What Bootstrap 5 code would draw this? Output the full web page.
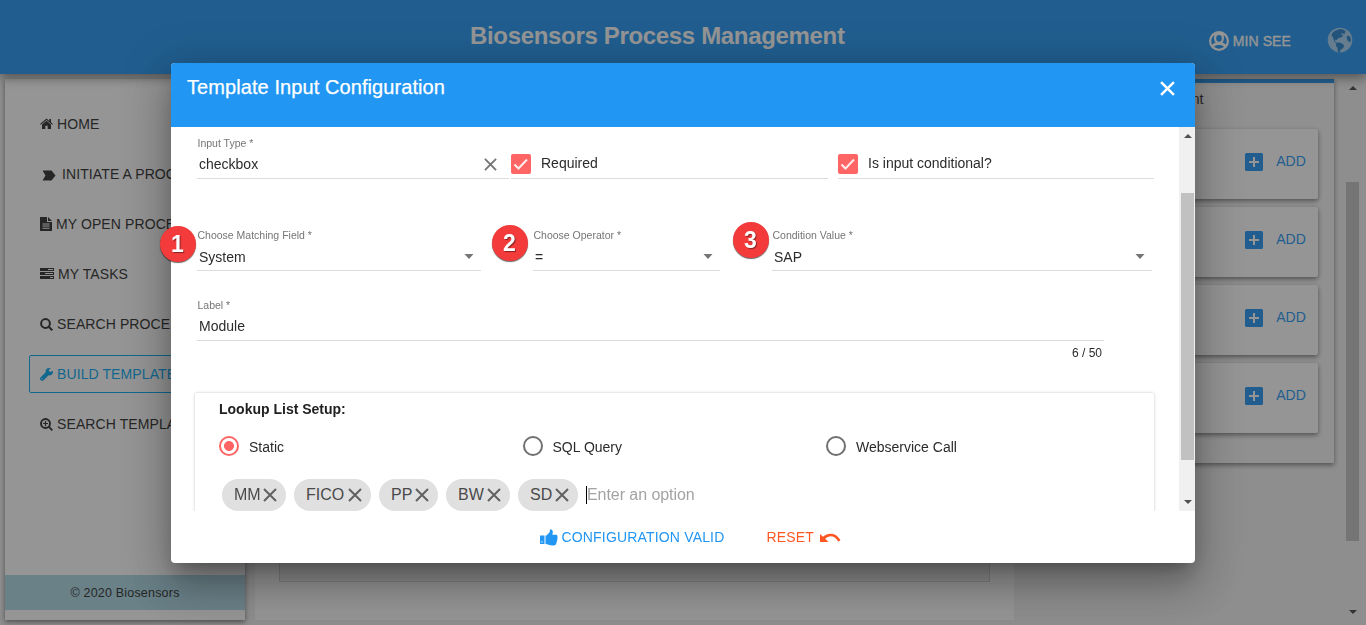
<!DOCTYPE html>
<html lang="en">
<head>
<meta charset="utf-8">
<title>Biosensors Process Management</title>
<link href="https://cdn.jsdelivr.net/npm/bootstrap@5.3.0/dist/css/bootstrap.min.css" rel="stylesheet">
<style>
body{font-family:"Liberation Sans",Arial,sans-serif;font-size:14px;line-height:20px;color:#2b2b2b;background:#f2f2f2;height:625px;overflow:hidden}
svg{flex:none;display:block}
.topbar{height:74px;background:#2196f3;color:#fff;box-shadow:0 4px 10px rgba(0,0,0,.45);position:relative;z-index:1;padding-right:13px}
.brand-title{font-size:24px;font-weight:700;letter-spacing:-.33px;padding-left:470px;line-height:72px;margin-top:-2px;white-space:nowrap}
.user-box{font-size:14px;-webkit-text-stroke:.3px #fff}
.panel{background:#fff;box-shadow:0 2px 5px rgba(0,0,0,.5)}
.page-area{height:551px;padding:5px 5px 5px 5px}
.side-menu{width:240px;height:541px;flex:none;padding-top:26px}
.side-item{height:38px;margin:0 24px 12px;padding-left:10px;border:1px solid transparent;border-radius:2px;white-space:nowrap;letter-spacing:.1px;overflow:hidden}
.side-item.current{border-color:#03a9f4;color:#03a9f4}
.side-foot{height:35px;background:#add8e6;margin-bottom:10px;font-size:12.5px;letter-spacing:.2px}
.middle{width:759px;height:541px;flex:none;margin-left:10px;background:#fff;padding:0 24px 38px}
.middle-box{background:#f0f0f0;border:1px solid #d4d4d4;border-top:0;height:503px}
.tools{width:310px;height:384px;flex:none;margin-left:10px;border-top:4px solid #2196f3;background:#f6f6f6;padding:0 16px}
.tool-title{height:46px;line-height:32px;text-align:center}
.tool-card{height:70px;margin-bottom:8px;border-radius:2px;color:#2196f3;padding:0 12px 4px}
.tool-card span{margin:-2px 0 0 13px;letter-spacing:.1px}
.page-scroll{width:17px;height:541px;margin-left:10px;background:#f1f1f1;padding:7px 2px 6px}
.page-thumb{width:13px;height:359px;background:#c1c1c1;margin-top:92px}
.modal-backdrop.tint{background:#212121;opacity:.48}
.modal-dialog.sheet{width:1024px;max-width:1024px;height:500px;margin:63px auto 0;transform:none}
.sheet .modal-content{height:500px;border:0;border-radius:4px;box-shadow:0 11px 15px -7px rgba(0,0,0,.25),0 24px 38px 3px rgba(0,0,0,.18),0 9px 46px 8px rgba(0,0,0,.18);color:#2b2b2b}
.sheet-head{height:64px;background:#2196f3;color:#fff;border-radius:4px 4px 0 0;padding:0 20px 0 16px}
.sheet-title{font-size:20px;line-height:48px;letter-spacing:.08px;-webkit-text-stroke:.25px #fff}
.sheet-view{height:384px;overflow:hidden}
.sheet-form{width:1008px;padding-left:26px}
.line-field{border-bottom:1px solid #dcdcdc;flex:none}
.line-field .cap{font-size:10.5px;line-height:14px;color:#757575;padding-left:.5px}
.val{padding-left:2px}
.row-a{height:52px}
.row-a .line-field{height:52px}
.row-a .first{padding-top:9px}
.row-b{margin-top:49px}
.row-b .line-field{height:43px}
.row-c{margin-top:27px}
.row-c .line-field{height:43px;width:907px}
.drop-val{height:29px;padding:0 7px 0 2px}
.drop-val span{padding-top:1px}
.tick{width:20px;height:20px;border-radius:2px;background:#ff6565}
.counter{width:905px;text-align:right;font-size:12px;line-height:16px;margin-top:4px}
.lookup{margin:32px 0 0 -2px;width:959px;height:140px;padding-left:24px;box-shadow:0 0 3px rgba(0,0,0,.24);border-radius:2px}
.lookup-title{font-weight:700;line-height:20px;padding-top:6px;color:#212121}
.choice{width:303.5px;height:20px}
.dot{width:20px;height:20px;border:2px solid #707070;border-radius:50%}
.dot.on{border-color:#ff6565;background:radial-gradient(circle,#ff6565 4.6px,transparent 5.3px)}
.tag-pill{height:32px;border-radius:16px;background:#e0e0e0;color:#4a4a4a;font-size:16px;padding:0 9px 0 12px}
.tag-pill svg{margin-left:auto;color:#616161}
.entry{height:18px;border-left:1px solid #000;font-size:16px;line-height:18px;color:#a3a3a3;letter-spacing:-.06px}
.bar-scroll{width:16px;height:384px;background:#f0f0f0;padding:7px 1px 7px 2px}
.bar-thumb{width:13px;height:267px;background:#c1c1c1;margin-top:55px}
.sheet-foot{height:52px;padding-left:369px;letter-spacing:.17px}
.num{position:absolute;width:36px;height:36px;border-radius:50%;background:#f33b3b;color:#fff;font-size:23px;font-weight:700;line-height:37px;text-align:center;box-shadow:0 1px 1px rgba(0,0,0,.6);text-shadow:1px 1px 1px rgba(0,0,0,.45);z-index:3}
.num-1{left:-11.500px;top:163px}.num-2{left:320.500px;top:162px}.num-3{left:561.500px;top:159px}
</style>
</head>
<body>
<svg width="0" height="0" class="d-none">
  <symbol id="plusbox" viewBox="0 0 18 18"><path fill="#2196f3" d="M1.500 0h15A1.500 1.500 0 0 1 18 1.500v15a1.500 1.500 0 0 1-1.500 1.500h-15A1.500 1.500 0 0 1 0 16.500v-15A1.500 1.500 0 0 1 1.500 0z"/><path fill="#fff" d="M8 4h2v4h4v2h-4v4H8v-4H4V8h4z"/></symbol>
  <symbol id="cross" viewBox="0 0 14 14"><path fill="none" stroke="currentColor" stroke-width="2" d="M1 1l12 12M13 1L1 13"/></symbol>
  <symbol id="caret" viewBox="0 0 10 5"><path fill="currentColor" d="M.5 0h9L5 5z"/></symbol>
  <symbol id="check" viewBox="0 0 20 20"><path fill="none" stroke="#fff" stroke-opacity=".88" stroke-width="2" d="M3.500 10.500l4 4L16 5.500"/></symbol>
</svg>

<header class="topbar d-flex align-items-center">
  <div class="brand-title me-auto">Biosensors Process Management</div>
  <div class="user-box d-flex align-items-center mt-2">
    <svg width="20" height="20" viewBox="0 0 20 20"><circle cx="10" cy="10" r="10" fill="#fff"/><g fill="#2196f3"><path d="M5.400 3.900C4.700 6.500 5 10 6.600 11.800 5.200 12.200 4 12.900 3.300 13.700 1.500 10.800 2 6.300 5.400 3.900z"/><path d="M14.600 3.900c.7 2.600.4 6.100-1.200 7.900 1.400.4 2.600 1.100 3.300 1.900 1.800-2.900 1.300-7.400-2.100-9.800z"/><ellipse cx="10" cy="7.400" rx="2.800" ry="3.300"/><path d="M5 15.600c2-2.100 8-2.100 10 0-2.800 2.700-7.200 2.700-10 0z"/></g></svg>
    <span style="margin-left:4px;letter-spacing:.1px">MIN SEE</span>
  </div>
  <svg style="margin:6px 0 0 36px" width="26" height="26" viewBox="0 0 26 26" opacity=".68"><circle cx="13" cy="13" r="12.300" fill="#e3eef5"/><path fill="#2479bd" d="M5 6.500C6.500 4.500 9 3 11 2.800l2-.8 3 .6 2.500 1.400-.5 2.500-1.500.5-1.500-1-1 1.500 2.500 1-2.500 2-2.500.5-1.500 2-1.500-.5-.7 1.700 2 1.500 3-.2 3 1.500 1.500 2-1.500 2.500-2 1-1.500 3-1.300-.5-.5-4-1.700-2.500.5-1.700L7 14l-1-3.500-1.500-2zM20.500 8.500l2.500 1 1 3.500-1 2.500-2.500-2-1-3z"/></svg>
</header>

<main class="page-area d-flex align-items-start">
  <nav class="side-menu panel d-flex flex-column">
    <div class="side-item d-flex align-items-center"><svg width="13" height="12" viewBox="0 0 13 12" class="me-1" fill="currentColor"><path d="M6.500 2.800L2 6.600V11h3.300V7.700h2.400V11H11V6.600z"/><path d="M6.500.6L0 6l.7.8 5.800-4.900L12.300 6.800 13 6l-2-1.700V1H9.300v1.900z"/></svg>HOME</div>
    <div class="side-item d-flex align-items-center"><svg width="14" height="11" viewBox="0 0 14 11" style="margin:2px 6px 0 2px" fill="currentColor"><path d="M.5.500h9L13.500 5.500l-4 5h-9l3-5z"/></svg>INITIATE A PROCESS</div>
    <div class="side-item d-flex align-items-center"><svg width="12" height="14" viewBox="0 0 12 14" class="me-1" fill="currentColor"><path fill-rule="evenodd" d="M0 0h7v5h5v9H0zM2.500 6.500h7v1h-7zM2.500 8.600h7v1h-7zM2.500 10.700h7v1h-7z"/><path d="M8 0l4 4H8z"/></svg>MY OPEN PROCESSES</div>
    <div class="side-item d-flex align-items-center"><svg width="14" height="11" viewBox="0 0 14 11" style="margin:-1px 4px 0 0" fill="currentColor"><path fill-rule="evenodd" d="M0 0h14v3H0zM0 4h14v3H0zM0 8h14v3H0zM8 1h5v1H8zM5 5h8v1H5zM10 9h3v1h-3z"/></svg>MY TASKS</div>
    <div class="side-item d-flex align-items-center"><svg width="13" height="13" viewBox="0 0 13 13" class="me-1" fill="none" stroke="currentColor" stroke-width="2"><circle cx="5.500" cy="5.500" r="4.400"/><path d="M8.700 8.700l3.600 3.600"/></svg>SEARCH PROCESS</div>
    <div class="side-item current d-flex align-items-center"><svg width="13" height="13" viewBox="0 0 13 13" class="me-1" fill="currentColor"><path fill-rule="evenodd" d="M11 .4L9 0C6.700 0 5.200 2 5.700 4.300L.5 9.600c-.7.700-.6 1.500 0 2.300l.6.600c.7.600 1.500.6 2.200 0l5.300-5.200c2.200.5 4.200-.9 4.400-3.300L12.700 2.700 10.500 4 8.900 3.100V1.700zM1.500 10.800a.6.600 0 1 1 1.200 0 .6.600 0 0 1-1.200 0z"/></svg>BUILD TEMPLATES</div>
    <div class="side-item d-flex align-items-center"><svg width="13" height="13" viewBox="0 0 13 13" class="me-1" fill="none" stroke="currentColor" stroke-width="1.900"><circle cx="5.500" cy="5.500" r="4.500"/><path d="M8.700 8.700l3.600 3.600"/><path stroke-width="1.200" d="M3 5.500h5M5.500 3v5"/></svg>SEARCH TEMPLATES</div>
    <div class="side-foot mt-auto d-flex align-items-center justify-content-center">© 2020 Biosensors</div>
  </nav>
  <section class="middle"><div class="middle-box"></div></section>
  <aside class="tools panel">
    <div class="tool-title">Content</div>
    <div class="tool-card panel d-flex align-items-center justify-content-end"><svg width="18" height="18"><use href="#plusbox"/></svg><span>ADD</span></div>
    <div class="tool-card panel d-flex align-items-center justify-content-end"><svg width="18" height="18"><use href="#plusbox"/></svg><span>ADD</span></div>
    <div class="tool-card panel d-flex align-items-center justify-content-end"><svg width="18" height="18"><use href="#plusbox"/></svg><span>ADD</span></div>
    <div class="tool-card panel d-flex align-items-center justify-content-end"><svg width="18" height="18"><use href="#plusbox"/></svg><span>ADD</span></div>
  </aside>
  <div class="page-scroll d-flex flex-column align-items-center">
    <svg width="8" height="4" viewBox="0 0 8 4" fill="#444"><path d="M0 4h8L4 0z"/></svg>
    <div class="page-thumb"></div>
    <svg class="mt-auto" width="8" height="4" viewBox="0 0 8 4" fill="#444"><path d="M0 0h8L4 4z"/></svg>
  </div>
</main>

<div class="modal-backdrop tint"></div>
<div class="modal d-block overflow-hidden">
  <div class="modal-dialog sheet">
    <div class="modal-content">
      <div class="sheet-head d-flex align-items-start justify-content-between">
        <div class="sheet-title">Template Input Configuration</div>
        <svg style="margin-top:18px" width="15" height="15" viewBox="0 0 14 14"><path fill="none" stroke="#fff" stroke-width="2.300" d="M1 1l12 12M13 1L1 13"/></svg>
      </div>
      <div class="sheet-view d-flex">
        <div class="sheet-form">
          <div class="row-a d-flex">
            <div class="line-field first" style="width:312px">
              <div class="cap">Input Type *</div>
              <div class="val d-flex align-items-center justify-content-between" style="height:28px;padding-right:12px">checkbox<svg width="13" height="13" color="#757575"><use href="#cross"/></svg></div>
            </div>
            <div class="line-field d-flex align-items-start" style="width:317px;margin-left:2px;padding-top:27px">
              <div class="tick"><svg width="20" height="20"><use href="#check"/></svg></div><span style="margin:-1px 0 0 10px">Required</span>
            </div>
            <div class="line-field d-flex align-items-start" style="width:316px;margin-left:10px;padding-top:27px">
              <div class="tick"><svg width="20" height="20"><use href="#check"/></svg></div><span style="margin:-1px 0 0 10px">Is input conditional?</span>
            </div>
          </div>
          <div class="row-b d-flex">
            <div class="line-field" style="width:284px"><div class="cap">Choose Matching Field *</div><div class="val drop-val d-flex align-items-center justify-content-between"><span>System</span><svg width="10" height="5" color="#757575"><use href="#caret"/></svg></div></div>
            <div class="line-field" style="width:187px;margin-left:52px"><div class="cap">Choose Operator *</div><div class="val drop-val d-flex align-items-center justify-content-between"><span>=</span><svg width="10" height="5" color="#757575"><use href="#caret"/></svg></div></div>
            <div class="line-field" style="width:380px;margin-left:52px"><div class="cap">Condition Value *</div><div class="val drop-val d-flex align-items-center justify-content-between"><span>SAP</span><svg width="10" height="5" color="#757575"><use href="#caret"/></svg></div></div>
          </div>
          <div class="row-c"><div class="line-field"><div class="cap">Label *</div><div class="val" style="line-height:29px">Module</div></div><div class="counter">6 / 50</div></div>
          <div class="lookup">
            <div class="lookup-title">Lookup List Setup:</div>
            <div class="d-flex" style="margin-top:17px">
              <div class="choice d-flex"><div class="dot on"></div><span style="margin:1px 0 0 10px">Static</span></div>
              <div class="choice d-flex"><div class="dot"></div><span style="margin:1px 0 0 10px">SQL Query</span></div>
              <div class="choice d-flex"><div class="dot"></div><span style="margin:1px 0 0 10px">Webservice Call</span></div>
            </div>
            <div class="d-flex align-items-center gap-2" style="margin:23px 0 0 3px">
              <div class="tag-pill d-flex align-items-center" style="width:64px">MM<svg width="14" height="14"><use href="#cross"/></svg></div>
              <div class="tag-pill d-flex align-items-center" style="width:77px">FICO<svg width="14" height="14"><use href="#cross"/></svg></div>
              <div class="tag-pill d-flex align-items-center" style="width:59px">PP<svg width="14" height="14"><use href="#cross"/></svg></div>
              <div class="tag-pill d-flex align-items-center" style="width:64px">BW<svg width="14" height="14"><use href="#cross"/></svg></div>
              <div class="tag-pill d-flex align-items-center" style="width:60px">SD<svg width="14" height="14"><use href="#cross"/></svg></div>
              <div class="entry">Enter an option</div>
            </div>
          </div>
        </div>
        <div class="bar-scroll d-flex flex-column align-items-center ms-auto">
          <svg width="8" height="4" viewBox="0 0 8 4" fill="#505050"><path d="M0 4h8L4 0z"/></svg>
          <div class="bar-thumb"></div>
          <svg class="mt-auto" width="8" height="4" viewBox="0 0 8 4" fill="#505050"><path d="M0 0h8L4 4z"/></svg>
        </div>
      </div>
      <div class="sheet-foot d-flex align-items-center">
        <svg width="18" height="17" viewBox="0 0 18 17" fill="#2196f3"><path fill-rule="evenodd" d="M0 6.500h4.500V15H0zM1.300 12.300v1.300h1.200v-1.300z"/><path d="M5.500 6.500h1L9.600 3.300 10 .5h1.500C13.200 1.500 13 4 12.300 5.800h4c1.300.3 1.500 1.700 1 2.500.6.800.4 2-.3 2.500.4.900.1 1.900-.6 2.400.2 1.900-.8 3.200-2.900 3.300C9.500 16.700 8 15 5.500 15z"/></svg>
        <span style="color:#2196f3;margin-left:3.500px">CONFIGURATION VALID</span>
        <span style="color:#ff5722;margin-left:42px">RESET</span>
        <svg style="margin:2px 0 0 6px" width="21" height="10" viewBox="0 0 21 10" fill="#ff5722"><path d="M0 1l3 2.800C8-.5 16-1.200 20.500 7.500l-2.400.9C14.500 2 9 2.200 5.200 5.700L8.500 9H0z"/></svg>
      </div>
      <div class="num num-1">1</div><div class="num num-2">2</div><div class="num num-3">3</div>
    </div>
  </div>
</div>
<script src="https://cdn.jsdelivr.net/npm/bootstrap@5.3.0/dist/js/bootstrap.bundle.min.js"></script>
</body>
</html>
